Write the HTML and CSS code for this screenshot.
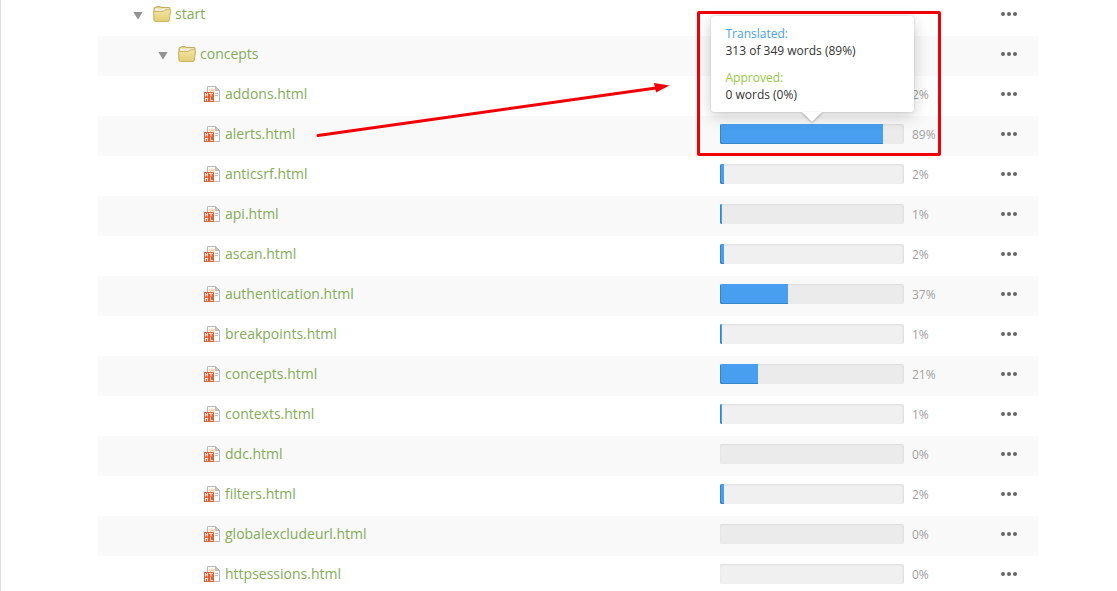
FILE: index.html
```html
<!DOCTYPE html>
<html lang="en">
<head>
<meta charset="utf-8">
<title>Files</title>
<link rel="stylesheet" href="styles.css">
</head>
<body>
<svg class="sprite" aria-hidden="true">
  <defs>
    <linearGradient id="folder-front" x1="0" y1="0" x2="0" y2="1">
      <stop offset="0" stop-color="#f1e5a4"/>
      <stop offset="1" stop-color="#e3ce74"/>
    </linearGradient>
  </defs>
  <symbol id="folder" viewBox="0 0 18 16">
    <path d="M1 14.5V2.5Q1 1.5 2 1.5H3L3.7.5H7.3L8 1.5H16.2Q17 1.5 17 2.5V6L16 14.5Z" fill="#e2cd80" stroke="#c4a95c"/>
    <path d="M2 2.400H16V5H2Z" fill="#f7f0e2"/>
    <path d="M.6 6.200Q.5 5.400 1.3 5.400H10.500L12 3.800H16.8Q17.6 3.800 17.500 4.600L16.2 14.7Q16 15.500 15.300 15.500H2.2Q1.400 15.500 1.300 14.700Z" fill="url(#folder-front)" stroke="#ceb565"/>
  </symbol>
  <symbol id="html-file" viewBox="0 0 16 16">
    <path d="M3.5.5H11.5L15.500 4.500V15.500H3.500Z" fill="#fff" stroke="#b9b9b9"/>
    <path d="M11.5.5V4.500H15.500Z" fill="#c9c9c9" stroke="#b9b9b9"/>
    <path d="M5 4.500L6.500 3M8 2V3.500M9.500 3L11 4.500M6 6L7 4.500H9.500L10 6" fill="none" stroke="#f3c471"/>
    <path d="M11 7.500H14M11 9.500H14" stroke="#bdbdbd"/>
    <path d="M0 6H10V16H0Z" fill="#df6237"/>
    <path d="M1.500 7V10.500M3.500 7V10.500M1.500 8.700H3.500M5 7.500H9M7 7.500V10.500M1.500 15V12M3.500 15V12M1.500 12.500H3.500M6.500 11.500V14.500H9" fill="none" stroke="#fbe3da"/>
  </symbol>
  <symbol id="dots" viewBox="0 0 16 4">
    <circle cx="2" cy="2" r="2"/><circle cx="8" cy="2" r="2"/><circle cx="14" cy="2" r="2"/>
  </symbol>
</svg>
<main class="page">
<table class="files">
<tbody>
<tr><td class="name"><div class="entry level-1"><button class="toggle" aria-label="Collapse start"></button><svg class="folder"><use href="#folder"/></svg><a href="#start">start</a></div></td><td class="progress"></td><td class="actions"><button class="more" aria-label="More"><svg><use href="#dots"/></svg></button></td></tr>
<tr><td class="name"><div class="entry level-2"><button class="toggle" aria-label="Collapse concepts"></button><svg class="folder"><use href="#folder"/></svg><a href="#concepts">concepts</a></div></td><td class="progress"></td><td class="actions"><button class="more" aria-label="More"><svg><use href="#dots"/></svg></button></td></tr>
<tr><td class="name"><div class="entry level-3"><svg class="file"><use href="#html-file"/></svg><a href="#addons">addons.html</a></div></td><td class="progress"><div class="meter"><div class="track"><div class="fill" style="width:2%"></div></div><span>2%</span></div></td><td class="actions"><button class="more" aria-label="More"><svg><use href="#dots"/></svg></button></td></tr>
<tr><td class="name"><div class="entry level-3"><svg class="file"><use href="#html-file"/></svg><a href="#alerts">alerts.html</a></div>
<svg class="arrow" viewBox="0 0 354 56" aria-hidden="true"><path d="M2 53.500L340 6" stroke="#f00004" stroke-width="3" stroke-linecap="round"/><path d="M338 1L353.500 3.500L340 10.500Z" fill="#f00004"/></svg></td><td class="progress"><div class="meter"><div class="track"><div class="fill" style="width:89%"></div>
<div class="tooltip" role="tooltip"><dl><dt class="translated">Translated:</dt><dd>313 of 349 words (89%)</dd><dt class="approved">Approved:</dt><dd>0 words (0%)</dd></dl></div>
<div class="callout"></div></div><span>89%</span></div></td><td class="actions"><button class="more" aria-label="More"><svg><use href="#dots"/></svg></button></td></tr>
<tr><td class="name"><div class="entry level-3"><svg class="file"><use href="#html-file"/></svg><a href="#anticsrf">anticsrf.html</a></div></td><td class="progress"><div class="meter"><div class="track"><div class="fill" style="width:2%"></div></div><span>2%</span></div></td><td class="actions"><button class="more" aria-label="More"><svg><use href="#dots"/></svg></button></td></tr>
<tr><td class="name"><div class="entry level-3"><svg class="file"><use href="#html-file"/></svg><a href="#api">api.html</a></div></td><td class="progress"><div class="meter"><div class="track"><div class="fill" style="width:1%"></div></div><span>1%</span></div></td><td class="actions"><button class="more" aria-label="More"><svg><use href="#dots"/></svg></button></td></tr>
<tr><td class="name"><div class="entry level-3"><svg class="file"><use href="#html-file"/></svg><a href="#ascan">ascan.html</a></div></td><td class="progress"><div class="meter"><div class="track"><div class="fill" style="width:2%"></div></div><span>2%</span></div></td><td class="actions"><button class="more" aria-label="More"><svg><use href="#dots"/></svg></button></td></tr>
<tr><td class="name"><div class="entry level-3"><svg class="file"><use href="#html-file"/></svg><a href="#authentication">authentication.html</a></div></td><td class="progress"><div class="meter"><div class="track"><div class="fill" style="width:37%"></div></div><span>37%</span></div></td><td class="actions"><button class="more" aria-label="More"><svg><use href="#dots"/></svg></button></td></tr>
<tr><td class="name"><div class="entry level-3"><svg class="file"><use href="#html-file"/></svg><a href="#breakpoints">breakpoints.html</a></div></td><td class="progress"><div class="meter"><div class="track"><div class="fill" style="width:1%"></div></div><span>1%</span></div></td><td class="actions"><button class="more" aria-label="More"><svg><use href="#dots"/></svg></button></td></tr>
<tr><td class="name"><div class="entry level-3"><svg class="file"><use href="#html-file"/></svg><a href="#concepts-page">concepts.html</a></div></td><td class="progress"><div class="meter"><div class="track"><div class="fill" style="width:21%"></div></div><span>21%</span></div></td><td class="actions"><button class="more" aria-label="More"><svg><use href="#dots"/></svg></button></td></tr>
<tr><td class="name"><div class="entry level-3"><svg class="file"><use href="#html-file"/></svg><a href="#contexts">contexts.html</a></div></td><td class="progress"><div class="meter"><div class="track"><div class="fill" style="width:1%"></div></div><span>1%</span></div></td><td class="actions"><button class="more" aria-label="More"><svg><use href="#dots"/></svg></button></td></tr>
<tr><td class="name"><div class="entry level-3"><svg class="file"><use href="#html-file"/></svg><a href="#ddc">ddc.html</a></div></td><td class="progress"><div class="meter"><div class="track"></div><span>0%</span></div></td><td class="actions"><button class="more" aria-label="More"><svg><use href="#dots"/></svg></button></td></tr>
<tr><td class="name"><div class="entry level-3"><svg class="file"><use href="#html-file"/></svg><a href="#filters">filters.html</a></div></td><td class="progress"><div class="meter"><div class="track"><div class="fill" style="width:2%"></div></div><span>2%</span></div></td><td class="actions"><button class="more" aria-label="More"><svg><use href="#dots"/></svg></button></td></tr>
<tr><td class="name"><div class="entry level-3"><svg class="file"><use href="#html-file"/></svg><a href="#globalexcludeurl">globalexcludeurl.html</a></div></td><td class="progress"><div class="meter"><div class="track"></div><span>0%</span></div></td><td class="actions"><button class="more" aria-label="More"><svg><use href="#dots"/></svg></button></td></tr>
<tr><td class="name"><div class="entry level-3"><svg class="file"><use href="#html-file"/></svg><a href="#httpsessions">httpsessions.html</a></div></td><td class="progress"><div class="meter"><div class="track"></div><span>0%</span></div></td><td class="actions"><button class="more" aria-label="More"><svg><use href="#dots"/></svg></button></td></tr>
</tbody>
</table>
</main>
</body>
</html>
```

FILE: styles.css
```css
* { box-sizing: border-box; }

body {
  margin: 0;
  background: #fff;
  font-family: "Open Sans", "Noto Sans", sans-serif;
  font-size: 14px;
  line-height: 20px;
}

.sprite { position: absolute; width: 0; height: 0; }

.page {
  min-height: 100vh;
  padding: 0 79px 0 97px;
  border-left: 1px solid #ddd;
  overflow: hidden;
}

/* The list is scrolled a little past its first row. */
.files {
  width: 100%;
  margin-top: -4px;
  border-collapse: collapse;
  table-layout: fixed;
}

.files td { height: 40px; padding: 0 0 4px; vertical-align: middle; }
.files tr:nth-child(even) td { background: #f9f9f9; }

.name { position: relative; }
.files .progress { width: 260px; }
.files .actions { width: 58px; text-align: center; }

.entry { display: flex; align-items: center; }
.entry a { color: #82ac57; text-decoration: none; }
.level-1 { padding-left: 35px; }
.level-2 { padding-left: 60px; }
.level-3 { padding-left: 106px; }

.toggle {
  width: 10px;
  height: 8px;
  margin: 3px 10px 0 0;
  padding: 0;
  border: 0;
  background: #929292;
  clip-path: polygon(0 0, 100% 0, 50% 100%);
}

.folder { width: 18px; height: 16px; margin-right: 4px; }
.file { width: 16px; height: 16px; margin-right: 5px; }

.more { display: flex; margin: 0 auto; padding: 6px; border: 0; background: none; }
.more svg { width: 16px; height: 4px; fill: #666; }

.meter { display: flex; align-items: center; gap: 8px; }
.meter span { padding-top: 1px; color: #a0a0a0; font-size: 12px; line-height: 19px; }

.track {
  position: relative;
  width: 184px;
  height: 20px;
  border-right: 1px solid #e2e2e2;
  border-radius: 2px;
  background: #f0f0f0;
  box-shadow: inset 0 1px 2px #dcdcdc;
}
tr:nth-child(even) .track { background: #ebebeb; }

.fill {
  height: 100%;
  border-radius: 2px 0 0 2px;
  background: #489fef;
  box-shadow: inset 1px -1px 0 #3585cc;
}

.tooltip {
  position: absolute;
  z-index: 2;
  left: 50%;
  bottom: calc(100% + 12px);
  width: 203px;
  margin-left: -101px;
  padding: 9px 15px;
  border-radius: 3px;
  background: #fff;
  box-shadow: 0 4px 16px rgba(0, 0, 0, 0.2), 0 0 2px rgba(0, 0, 0, 0.2);
  color: #333;
  font-size: 12px;
  line-height: 17px;
}
.tooltip::after {
  content: "";
  position: absolute;
  top: 100%;
  left: 50%;
  margin-left: -10px;
  border: 10px solid transparent;
  border-top-color: #fff;
  border-bottom: 0;
  filter: drop-shadow(0 1px 1px rgba(0, 0, 0, 0.3));
}
.tooltip dl, .tooltip dd { margin: 0; }
.tooltip dd + dt { margin-top: 10px; }
.translated { color: #489fef; }
.approved { color: #93c93f; }

.callout {
  position: absolute;
  z-index: 3;
  inset: -113px -38px -12px -23px;
  border: 3px solid #f00004;
  border-radius: 2px;
  pointer-events: none;
}

.arrow {
  position: absolute;
  z-index: 1;
  top: -34px;
  left: 218px;
  width: 354px;
  height: 56px;
  fill: none;
  pointer-events: none;
}
```
